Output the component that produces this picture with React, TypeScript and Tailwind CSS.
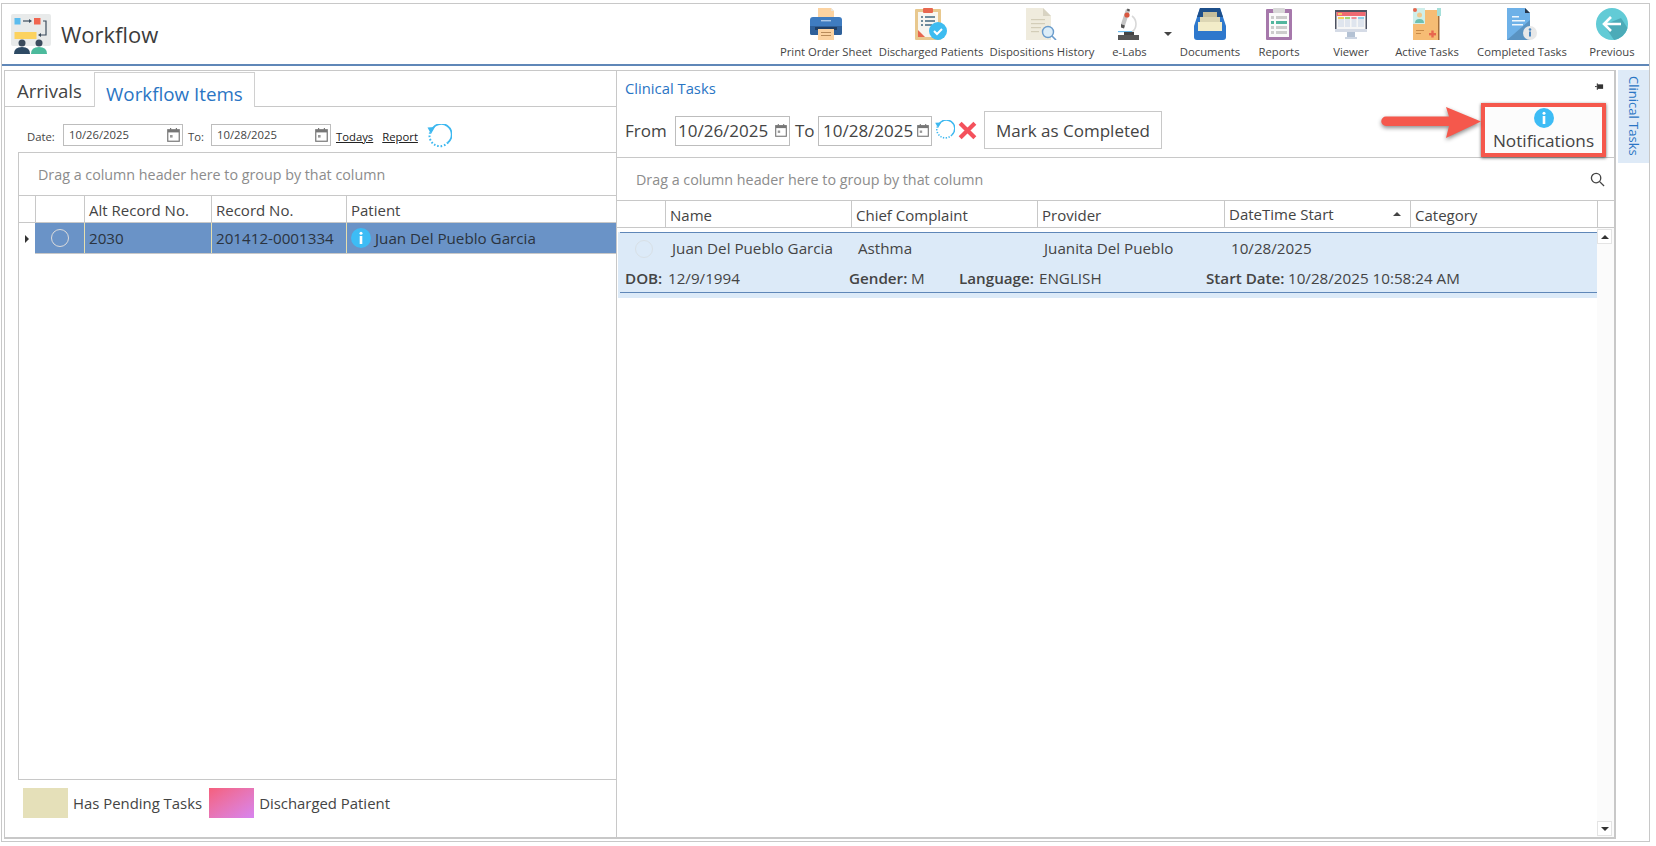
import React from 'react';

function InfoDot({ className }: { className: string }) {
  return (
    <svg viewBox="0 0 20 20" className={className}>
      <circle cx="10" cy="10" r="10" fill="#3dbcf5" />
      <circle cx="10" cy="5.2" r="1.5" fill="#fff" />
      <rect x="8.7" y="8" width="2.6" height="8" fill="#fff" />
    </svg>
  );
}

function CalendarIcon({ className }: { className: string }) {
  return (
    <svg viewBox="0 0 13 14" className={className} fill="none">
      <rect x="0.75" y="1.75" width="11.5" height="11.5" stroke="#777" strokeWidth="1.2" />
      <rect x="1" y="2" width="11" height="2.4" fill="#777" />
      <rect x="3" y="0" width="1.2" height="2" fill="#777" />
      <rect x="8.8" y="0" width="1.2" height="2" fill="#777" />
      <rect x="3" y="7" width="2.6" height="2.6" fill="#999" />
    </svg>
  );
}

function RefreshIcon({ className }: { className: string }) {
  return (
    <svg viewBox="0 0 26 26" className={className} fill="none">
      <path d="M5.5 6.5 A10.5 10.5 0 1 1 22 18.5" stroke="#3db8f0" strokeWidth="1.8" />
      <path d="M22 18.5 A10.5 10.5 0 0 1 4 8.5" stroke="#3db8f0" strokeWidth="2" strokeDasharray="1.6 1.8" />
      <path d="M1.5 3.5 L9 3 L5 10 Z" fill="#3db8f0" />
    </svg>
  );
}

function PrinterIcon() {
  return (
    <svg viewBox="0 0 32 32" className="h-8 w-8">
      <path d="M8 0h13l3 3v9H8z" fill="#fcd3a1" />
      <path d="M21 0l3 3h-3z" fill="#e8e4d8" />
      <path d="M3 9h26q3 0 3 3v13q0 2-2 2H2q-2 0-2-2V12q0-3 3-3z" fill="#3f7cc0" />
      <path d="M0 18h32v7q0 2-2 2H2q-2 0-2-2z" fill="#2f6099" />
      <rect x="11" y="12" width="10" height="1.4" fill="#a9c7e8" />
      <rect x="5" y="19" width="22" height="3" fill="#1f3f66" />
      <rect x="8" y="21" width="16" height="11" fill="#fcd3a1" />
      <rect x="11" y="24" width="10" height="1" fill="#b98c5a" />
      <rect x="11" y="27" width="10" height="1" fill="#b98c5a" />
    </svg>
  );
}

function ClipboardCheckIcon() {
  return (
    <svg viewBox="0 0 32 32" className="h-8 w-8">
      <rect x="0" y="1" width="26" height="31" rx="1" fill="#e8c88e" />
      <rect x="3" y="4" width="20" height="25" fill="#f8f6f0" />
      <path d="M3 22l7 7H3z" fill="#e8674f" />
      <rect x="8" y="0" width="10" height="5" rx="1" fill="#e8674f" />
      <rect x="6" y="8" width="2" height="2" fill="#6f8c9c" />
      <rect x="10" y="8" width="10" height="2" fill="#6f8c9c" />
      <rect x="6" y="12" width="2" height="2" fill="#6f8c9c" />
      <rect x="10" y="12" width="10" height="2" fill="#6f8c9c" />
      <rect x="6" y="16" width="2" height="2" fill="#6f8c9c" />
      <rect x="10" y="16" width="7" height="2" fill="#6f8c9c" />
      <circle cx="23" cy="23" r="9" fill="#3dbcf0" />
      <path d="M19 23l3 3 5-5" fill="none" stroke="#fff" strokeWidth="2" />
    </svg>
  );
}

function DocSearchIcon() {
  return (
    <svg viewBox="0 0 32 32" className="h-8 w-8">
      <path d="M0 0h17l8 8v24H0z" fill="#efebdd" />
      <path d="M17 0l8 8h-8z" fill="#d8d3c2" />
      <rect x="5" y="11" width="14" height="1.2" fill="#d3cdb8" />
      <rect x="5" y="15" width="14" height="1.2" fill="#d3cdb8" />
      <rect x="5" y="19" width="10" height="1.2" fill="#d3cdb8" />
      <rect x="5" y="23" width="8" height="1.2" fill="#d3cdb8" />
      <circle cx="22" cy="24" r="5.5" fill="#dcedf8" stroke="#6a9ccc" strokeWidth="1.4" />
      <path d="M26 28l4 4" stroke="#6a9ccc" strokeWidth="1.6" />
    </svg>
  );
}

function MicroscopeIcon() {
  return (
    <svg viewBox="0 0 24 32" className="h-8 w-6">
      <path d="M14 8a10 10 0 0 1 0 16" fill="none" stroke="#d8d8d8" strokeWidth="1.6" />
      <path d="M8 1l4 1.5-5 15-4-1.5z" fill="#c4c4c4" />
      <path d="M9.5 0.5l2.5 1-.7 2-2.5-1z" fill="#555" />
      <circle cx="9" cy="7" r="2.6" fill="#d9573f" />
      <path d="M3 16l4 1.5-1 3-3-1z" fill="#555" />
      <rect x="0" y="23" width="14" height="1.2" fill="#68b8ea" />
      <path d="M6 24h10v3H6z" fill="#444" />
      <rect x="0" y="27" width="21" height="5" fill="#555" />
    </svg>
  );
}

function TrayIcon() {
  return (
    <svg viewBox="0 0 32 32" className="h-8 w-8">
      <path d="M6 0h20l6 18v11q0 3-3 3H3q-3 0-3-3V18z" fill="#2e78cc" />
      <path d="M6 0h20l3 9H3z" fill="#1d4f8a" />
      <rect x="9" y="4" width="14" height="6" fill="#c4bd9a" />
      <rect x="6" y="9" width="20" height="6" fill="#dcd6b4" />
      <path d="M4 14h24v9H4z" fill="#f2ecc8" />
    </svg>
  );
}

function ReportIcon() {
  return (
    <svg viewBox="0 0 26 32" className="h-8 w-[26px]">
      <rect x="0" y="1" width="26" height="31" rx="1" fill="#a678ab" />
      <rect x="3" y="5" width="20" height="24" fill="#fafafa" />
      <rect x="7" y="0" width="12" height="5" rx="1" fill="#d8d8d8" />
      <rect x="5" y="8" width="3" height="3" fill="#ccc" />
      <rect x="10" y="8" width="11" height="3" fill="#ccc" />
      <rect x="5" y="13" width="3" height="3" fill="#52b69e" />
      <rect x="10" y="13" width="11" height="3" fill="#52b69e" />
      <rect x="5" y="18" width="3" height="3" fill="#ccc" />
      <rect x="10" y="18" width="11" height="3" fill="#ccc" />
      <rect x="5" y="23" width="3" height="3" fill="#ccc" />
      <rect x="10" y="23" width="11" height="3" fill="#ccc" />
    </svg>
  );
}

function MonitorIcon() {
  return (
    <svg viewBox="0 0 32 32" className="h-8 w-8">
      <rect x="0" y="2" width="32" height="22" fill="#4c5160" />
      <rect x="1.5" y="4" width="29" height="17" fill="#f6f6f6" />
      <rect x="1.5" y="4" width="29" height="4" fill="#ef6a72" />
      <rect x="3" y="5" width="4" height="2" fill="#f7c15f" />
      <rect x="3" y="9" width="6" height="10" fill="#dfe5ee" />
      <rect x="3" y="9" width="6" height="2" fill="#f6cf5b" />
      <rect x="10" y="9" width="5" height="10" fill="#dfe5ee" />
      <rect x="10" y="9" width="5" height="2" fill="#a6d672" />
      <rect x="16.5" y="9" width="5" height="10" fill="#dfe5ee" />
      <rect x="16.5" y="9" width="5" height="2" fill="#ef8f98" />
      <rect x="23" y="9" width="6" height="10" fill="#dfe5ee" />
      <rect x="23" y="9" width="6" height="2" fill="#8fd0ea" />
      <rect x="0" y="21" width="32" height="3" fill="#d5dbe6" />
      <rect x="12" y="24" width="8" height="5" fill="#b4c2d4" />
      <rect x="10" y="29" width="12" height="2" fill="#ccd5e2" />
    </svg>
  );
}

function FolderIcon() {
  return (
    <svg viewBox="0 0 28 32" className="h-8 w-7">
      <path d="M0 2h24q2 0 2 2v28H0z" fill="#f6bc74" />
      <rect x="24" y="0" width="4" height="8" fill="#a5dfd9" />
      <rect x="25" y="8" width="1.5" height="24" fill="#a36e3a" />
      <rect x="0" y="0" width="12" height="16" fill="#cfeeea" />
      <circle cx="2" cy="2" r="2" fill="#e8674f" />
      <circle cx="6.5" cy="7" r="2.5" fill="#f1c98e" />
      <path d="M2 15q0-4 4.5-4t4.5 4z" fill="#6fbfb0" />
      <rect x="3" y="22" width="8" height="1" fill="#c98a46" />
      <rect x="3" y="25" width="5" height="1" fill="#c98a46" />
      <rect x="16" y="25" width="7" height="2.4" fill="#e8674f" />
      <rect x="18.3" y="22.5" width="2.4" height="7" fill="#e8674f" />
    </svg>
  );
}

function DocInfoIcon() {
  return (
    <svg viewBox="0 0 30 32" className="h-8 w-[30px]">
      <path d="M0 0h18l5 5v27H0z" fill="#6eb1e8" />
      <path d="M0 32l23-20v20z" fill="#5a93c2" />
      <path d="M18 0l5 5h-5z" fill="#27364a" />
      <rect x="5" y="8" width="7" height="1.5" fill="#eef6fc" />
      <rect x="5" y="12" width="13" height="1.5" fill="#eef6fc" />
      <rect x="5" y="16" width="11" height="1.5" fill="#eef6fc" />
      <circle cx="23" cy="25" r="7" fill="#e8e8e8" />
      <circle cx="23" cy="21.5" r="1.3" fill="#4a86c0" />
      <rect x="22" y="23.5" width="2" height="5" fill="#4a86c0" />
    </svg>
  );
}

function BackIcon() {
  return (
    <svg viewBox="0 0 32 32" className="h-8 w-8">
      <circle cx="16" cy="16" r="16" fill="#62cbd6" />
      <path d="M8 17l17-7 6.5 10A16 16 0 0 1 18 31.9z" fill="#4cabb8" />
      <path d="M15 9l-7 7 7 7M8 16h17" fill="none" stroke="#fff" strokeWidth="2.6" />
    </svg>
  );
}

function WorkflowLogo() {
  return (
    <svg viewBox="0 0 40 40" className="h-10 w-10 shrink-0">
      <rect x="0" y="0" width="40" height="32" rx="2" fill="#e8eaea" />
      <rect x="3.5" y="4" width="6" height="6.5" fill="#5bbcee" />
      <path d="M12 7h7" stroke="#3b4b5c" strokeWidth="1.2" />
      <path d="M18 5l3 2-3 2z" fill="#3b4b5c" />
      <rect x="23" y="4" width="6.5" height="6.5" fill="#f0654f" />
      <rect x="3.5" y="18" width="22" height="7" fill="#fcd25f" />
      <path d="M32 7h3v14h-6" fill="none" stroke="#3b4b5c" strokeWidth="1.2" />
      <path d="M30 19l-3 2 3 2z" fill="#3b4b5c" />
      <circle cx="11" cy="29" r="3.5" fill="#3b4b5c" />
      <circle cx="28" cy="29" r="3.5" fill="#3b4b5c" />
      <path d="M3 40q0-7 8-7t8 7z" fill="#2e4a64" />
      <path d="M20 40q0-7 8-7t8 7z" fill="#4cba9c" />
    </svg>
  );
}

const toolbar = [
  { label: 'Print Order Sheet', icon: <PrinterIcon />, w: 'w-[100px]' },
  { label: 'Discharged Patients', icon: <ClipboardCheckIcon />, w: 'w-[110px]' },
  { label: 'Dispositions History', icon: <DocSearchIcon />, w: 'w-[112px]' },
  { label: 'e-Labs', icon: <MicroscopeIcon />, w: 'w-[63px]', caret: true },
  { label: 'Documents', icon: <TrayIcon />, w: 'w-[62px]' },
  { label: 'Reports', icon: <ReportIcon />, w: 'w-[76px]' },
  { label: 'Viewer', icon: <MonitorIcon />, w: 'w-[68px]' },
  { label: 'Active Tasks', icon: <FolderIcon />, w: 'w-[84px]' },
  { label: 'Completed Tasks', icon: <DocInfoIcon />, w: 'w-[106px]' },
  { label: 'Previous', icon: <BackIcon />, w: 'w-[74px]' },
];

function Header() {
  return (
    <div className="flex h-[62px] shrink-0 border-b-2 border-[#5f87b8]">
      <div className="flex items-start pl-[9px] pt-[10px]">
        <WorkflowLogo />
        <span className="ml-[10px] mt-[5px] text-[22px] leading-[30px] font-medium text-[#3c3c3c]">Workflow</span>
      </div>
      <div className="ml-auto flex">
        {toolbar.map((item) => (
          <React.Fragment key={item.label}>
            <div className={`flex flex-col items-center pt-[4px] ${item.w}`}>
              <div className="flex h-8 items-center">{item.icon}</div>
              <span className="mt-[3px] whitespace-nowrap text-[11.3px] leading-[17px] text-[#444]">{item.label}</span>
            </div>
            {item.caret && (
              <div className="w-[18px] pl-[3px] pt-[28px]">
                <div className="h-0 w-0 border-x-[4px] border-t-[4px] border-x-transparent border-t-[#444]" />
              </div>
            )}
          </React.Fragment>
        ))}
      </div>
    </div>
  );
}

function LeftPanel() {
  return (
    <div className="flex w-[612px] shrink-0 flex-col border-r border-[#c8c8c8]">
      <div className="flex h-[36px] shrink-0 items-end border-b border-[#c8c8c8]">
        <div className="h-[35px] w-[89px] pl-3 pt-[5px] text-[18.6px] leading-[30px] text-[#444]">Arrivals</div>
        <div className="-mb-px h-[35px] w-[161px] border-x border-t border-[#d0d0d0] bg-white pl-[11px] pt-[6px] text-[18.8px] leading-[30px] text-[#2a75c4]">
          Workflow Items
        </div>
      </div>

      <div className="flex h-[45px] shrink-0 items-end pb-[6px] text-[11.3px] text-[#444]">
        <span className="ml-[22px] w-[36px]">Date:</span>
        <div className="flex h-[22px] w-[120px] items-center justify-between border border-[#bdbdbd] pl-[5px] pr-[2px]">
          10/26/2025
          <CalendarIcon className="h-[14px] w-[13px]" />
        </div>
        <span className="ml-[5px] w-[23px]">To:</span>
        <div className="flex h-[22px] w-[120px] items-center justify-between border border-[#bdbdbd] pl-[5px] pr-[2px]">
          10/28/2025
          <CalendarIcon className="h-[14px] w-[13px]" />
        </div>
        <a className="ml-[5px] text-[#222] underline">Todays</a>
        <a className="ml-[9px] text-[#222] underline">Report</a>
        <RefreshIcon className="-mb-[4px] ml-[8px] h-[26px] w-[26px]" />
      </div>

      <div className="ml-[13px] flex flex-1 flex-col border-y border-l border-[#c8c8c8]">
        <div className="flex h-[43px] shrink-0 items-center border-b border-[#c8c8c8] pl-[19px] pt-px text-[14.3px] text-[#8c8c8c]">
          Drag a column header here to group by that column
        </div>
        <div className="flex h-[27px] shrink-0 border-b border-[#c8c8c8] text-[15px] leading-[29px] text-[#444]">
          <div className="w-[17px] border-r border-[#c8c8c8]" />
          <div className="w-[49px] border-r border-[#c8c8c8]" />
          <div className="w-[127px] border-r border-[#c8c8c8] pl-[4px]">Alt Record No.</div>
          <div className="w-[135px] border-r border-[#c8c8c8] pl-[4px]">Record No.</div>
          <div className="pl-[4px]">Patient</div>
        </div>
        <div className="flex h-[31px] shrink-0 text-[15.2px] leading-[31px] text-[#2b3440]">
          <div className="flex w-[16px] items-center justify-center">
            <div className="h-0 w-0 border-y-[4px] border-l-[4px] border-y-transparent border-l-[#333]" />
          </div>
          <div className="flex flex-1 border-b border-[#c8c8c8] bg-[#6a93c7]">
            <div className="flex w-[50px] items-center justify-center border-r border-[#e6dfae]">
              <div className="h-[18px] w-[18px] rounded-full border border-[#dcdcdc]" />
            </div>
            <div className="w-[127px] border-r border-[#e6dfae] pl-[4px]">2030</div>
            <div className="w-[135px] border-r border-[#e6dfae] pl-[4px]">201412-0001334</div>
            <div className="flex items-center pl-[4px]">
              <InfoDot className="mr-[4px] h-[20px] w-[20px]" />
              Juan Del Pueblo Garcia
            </div>
          </div>
        </div>
      </div>

      <div className="flex h-[57px] shrink-0 items-start pl-[18px] pt-[8px] text-[14.9px] leading-[30px] text-[#444]">
        <div className="h-[30px] w-[45px] bg-[#e5e0b9]" />
        <span className="ml-[5px]">Has Pending Tasks</span>
        <div className="ml-[7px] h-[30px] w-[45px] bg-gradient-to-br from-[#f55f7c] to-[#d784f0]" />
        <span className="ml-[5px]">Discharged Patient</span>
      </div>
    </div>
  );
}

function RightPanel() {
  return (
    <div className="relative flex min-w-0 flex-1 flex-col">
      <div className="flex h-[87px] shrink-0 flex-col border-b border-[#c8c8c8] pl-[8px]">
        <div className="flex h-[29px] items-end justify-between">
          <span className="text-[14.8px] leading-[24px] text-[#2a75c4]">Clinical Tasks</span>
          <svg viewBox="0 0 10 10" className="mb-[8px] mr-[10px] h-[9px] w-[9px]">
            <rect x="3" y="1.5" width="6" height="5" fill="#333" />
            <rect x="2" y="0.5" width="1.2" height="7" fill="#333" />
            <rect x="0" y="3.5" width="2" height="1" fill="#333" />
          </svg>
        </div>
        <div className="mt-[12px] flex items-center text-[17px] text-[#444]">
          <span className="w-[50px]">From</span>
          <div className="flex h-[30px] w-[115px] items-center justify-between border border-[#bdbdbd] pl-[2px] pr-[2px]">
            10/26/2025
            <CalendarIcon className="h-[13px] w-[12px]" />
          </div>
          <span className="w-[28px] pl-[5px]">To</span>
          <div className="flex h-[30px] w-[114px] items-center justify-between border border-[#bdbdbd] pl-[4px] pr-[2px]">
            10/28/2025
            <CalendarIcon className="h-[13px] w-[12px]" />
          </div>
          <RefreshIcon className="ml-[2px] h-[21px] w-[21px]" />
          <svg viewBox="0 0 20 20" className="ml-[2px] h-[21px] w-[21px]">
            <path d="M3 3l14 14M17 3L3 17" stroke="#f4515c" strokeWidth="4" />
          </svg>
          <div className="-mt-[1px] ml-[6px] flex h-[38px] w-[178px] items-center justify-center border border-[#c8c8c8] pt-px">
            Mark as Completed
          </div>
        </div>
      </div>

      <div className="flex h-[43px] shrink-0 items-center justify-between border-b border-[#c8c8c8] pl-[19px] pr-[9px] pt-px text-[14.3px] text-[#8c8c8c]">
        Drag a column header here to group by that column
        <svg viewBox="0 0 16 16" className="h-[15px] w-[15px]" fill="none" stroke="#444" strokeWidth="1.4">
          <circle cx="6.5" cy="6.5" r="5" />
          <path d="M10 10l5 5" />
        </svg>
      </div>

      <div className="flex h-[27px] shrink-0 border-b border-[#c8c8c8] text-[15px] leading-[29px] text-[#444]">
        <div className="w-[49px] border-r border-[#c8c8c8]" />
        <div className="w-[186px] border-r border-[#c8c8c8] pl-[4px]">Name</div>
        <div className="w-[186px] border-r border-[#c8c8c8] pl-[4px]">Chief Complaint</div>
        <div className="w-[187px] border-r border-[#c8c8c8] pl-[4px]">Provider</div>
        <div className="flex w-[186px] items-center justify-between border-r border-[#c8c8c8] pl-[4px] pr-[9px]">
          DateTime Start
          <div className="h-0 w-0 border-x-[4px] border-b-[4px] border-x-transparent border-b-[#444]" />
        </div>
        <div className="w-[187px] border-r border-[#c8c8c8] pl-[4px]">Category</div>
      </div>

      <div className="flex min-h-0 flex-1">
        <div className="flex-1">
          <div className="ml-px mt-[4px] h-[66px] w-[979px] bg-[#dceaf8] text-[15.2px] text-[#444]">
            <div className="ml-[2px] h-[61px] border-y border-[#5f87b8]">
              <div className="flex h-[31px] items-center">
                <div className="ml-[15px] h-[18px] w-[18px] rounded-full border border-[#d8e0e6]" />
                <span className="ml-[19px] w-[186px] whitespace-nowrap">Juan Del Pueblo Garcia</span>
                <span className="w-[186px]">Asthma</span>
                <span className="w-[187px] whitespace-nowrap">Juanita Del Pueblo</span>
                <span>10/28/2025</span>
              </div>
              <div className="flex h-[28px] items-center whitespace-nowrap pl-[5px]">
                <span className="w-[43px] font-semibold">DOB:</span>
                <span className="w-[181px]">12/9/1994</span>
                <span className="w-[62px] font-semibold">Gender:</span>
                <span className="w-[48px]">M</span>
                <span className="w-[80px] font-semibold">Language:</span>
                <span className="w-[167px]">ENGLISH</span>
                <span className="w-[82px] font-semibold">Start Date:</span>
                <span>10/28/2025 10:58:24 AM</span>
              </div>
            </div>
          </div>
        </div>
        <div className="flex w-[17px] shrink-0 flex-col justify-between bg-[#fbfbfb] py-px">
          <div className="flex h-[15px] w-[15px] items-center justify-center border border-[#e4e4e4] bg-white">
            <div className="h-0 w-0 border-x-[4px] border-b-[4px] border-x-transparent border-b-[#333]" />
          </div>
          <div className="flex h-[15px] w-[15px] items-center justify-center border border-[#e4e4e4] bg-white">
            <div className="h-0 w-0 border-x-[4px] border-t-[4px] border-x-transparent border-t-[#333]" />
          </div>
        </div>
      </div>

      {/* Annotation over the toolbar */}
      <div className="absolute left-[864px] top-[32px] flex h-[54px] w-[125px] flex-col items-center border-[4px] border-[#f5584c] bg-[#fcfcfc] shadow-[0_1px_3px_rgba(0,0,0,0.6)]">
        <InfoDot className="mt-[1px] h-[20px] w-[20px]" />
        <span className="mt-px text-[17.2px] leading-[24px] text-[#444]">Notifications</span>
      </div>
      <svg viewBox="0 0 100 34" className="absolute left-[764px] top-[34px] h-[34px] w-[100px] drop-shadow-[0_2px_2px_rgba(0,0,0,0.45)]">
        <path d="M5 11.5H68L65 2L100 16.5L65 33L68 21H5a4.75 4.75 0 0 1 0-9.5z" fill="#f5584c" />
      </svg>
    </div>
  );
}

export default function App() {
  return (
    <div className="h-[846px] w-[1656px] overflow-hidden bg-white pl-px pt-[3px] font-['Open_Sans',sans-serif]">
      <div className="flex h-[839px] w-[1649px] flex-col border border-[#c8c8c8]">
        <Header />
        <div className="flex min-h-0 flex-1 pl-[2px] pt-[4px]">
          <div className="flex h-[769px] w-[1612px] shrink-0 border-y border-l border-r-2 border-b-2 border-[#c8c8c8]">
            <LeftPanel />
            <RightPanel />
          </div>
          <div className="ml-[2px] flex h-[93px] w-[31px] justify-center bg-[#deeaf7] pt-[6px]">
            <span className="text-[13px] leading-[31px] text-[#2a75c4] [writing-mode:vertical-rl]">Clinical Tasks</span>
          </div>
        </div>
      </div>
    </div>
  );
}
